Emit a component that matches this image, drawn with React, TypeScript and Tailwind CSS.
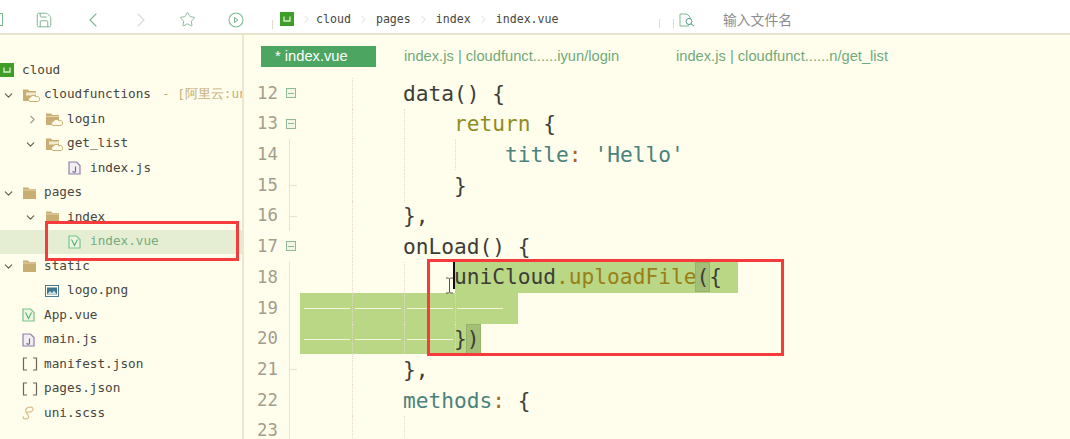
import type { ReactNode } from "react";
import { ChevronRight, ChevronDown, ChevronLeft, Star, Save } from "lucide-react";

const mono = "font-['DejaVu_Sans_Mono',monospace]";

// sidebar tree
const tree = [
  { label: "cloud", depth: 0, icon: "uni" },
  { label: "cloudfunctions", depth: 0, arrow: "down", icon: "cloudOpen", extra: true },
  { label: "login", depth: 1, arrow: "right", icon: "cloudClosed" },
  { label: "get_list", depth: 1, arrow: "down", icon: "cloudOpen" },
  { label: "index.js", depth: 2, icon: "js" },
  { label: "pages", depth: 0, arrow: "down", icon: "folder" },
  { label: "index", depth: 1, arrow: "down", icon: "folder" },
  { label: "index.vue", depth: 2, icon: "vue", active: true },
  { label: "static", depth: 0, arrow: "down", icon: "folder" },
  { label: "logo.png", depth: 1, icon: "image" },
  { label: "App.vue", depth: 0, icon: "vue" },
  { label: "main.js", depth: 0, icon: "js" },
  { label: "manifest.json", depth: 0, icon: "json" },
  { label: "pages.json", depth: 0, icon: "json" },
  { label: "uni.scss", depth: 0, icon: "sass" },
];

function UniLogo() {
  return (
    <svg width="14" height="14" viewBox="0 0 14 14" className="shrink-0">
      <rect width="14" height="14" fill="#3f9e2a" />
      <path d="M4 4.500v4.500h6V4.500" fill="none" stroke="#d9efc9" strokeWidth="1.300" />
    </svg>
  );
}

function FileIcon({ name }: { name: string }) {
  if (name === "uni") return <UniLogo />;
  if (name === "folder" || name === "cloudOpen" || name === "cloudClosed") {
    return (
      <svg width="18" height="14" viewBox="0 0 18 14">
        <path d="M1 1.500h5l1.500 1.500H14V13H1z" fill="#c9ae73" />
        {name === "cloudOpen" && <path d="M4 4.500h10.500l-1.500 3H4z" fill="#f2ead0" />}
        {name === "cloudClosed" && <path d="M1 4.500h13" stroke="#e5d6ac" strokeWidth="1" />}
        {name === "folder" && <path d="M1 4h13" stroke="#e5d6ac" strokeWidth="1" />}
        {name !== "folder" && (
          <path d="M8 13.500a2.200 2.200 0 0 1 .5-4.300 3 3 0 0 1 5.300-.4 2.400 2.400 0 0 1 2.500 4.700z" fill="#fffdeb" stroke="#c9ae73" strokeWidth="1" />
        )}
      </svg>
    );
  }
  if (name === "js") {
    return (
      <svg width="13" height="14" viewBox="0 0 13 14">
        <path d="M1 1h7.500L12 4.500V13H1z" fill="#f1eef2" stroke="#8d80ad" strokeWidth="1.200" />
        <path d="M7.500 5.500v4.500a1.300 1.300 0 0 1-2.600 0" fill="none" stroke="#6e6490" strokeWidth="1.100" />
      </svg>
    );
  }
  if (name === "vue") {
    return (
      <svg width="13" height="14" viewBox="0 0 13 14">
        <path d="M1 1h7.500L12 4.500V13H1z" fill="#eef6e2" stroke="#79c48e" strokeWidth="1.200" />
        <path d="M3.500 4.500L6.500 10.500L9.500 4.500" fill="none" stroke="#54ae6e" strokeWidth="1.100" />
      </svg>
    );
  }
  if (name === "image") {
    return (
      <svg width="14" height="12" viewBox="0 0 14 12">
        <rect x="0.500" y="0.500" width="13" height="11" fill="#fffdeb" stroke="#4c7c91" />
        <rect x="2" y="2.500" width="10" height="7" fill="#3f7590" />
        <path d="M2 9.500l3-3.500 2 2 2-2.500 3 4z" fill="#c9dde0" />
      </svg>
    );
  }
  if (name === "json") {
    return (
      <svg width="16" height="14" viewBox="0 0 16 14">
        <path d="M5 1H1.500v12H5M11 1h3.500v12H11" fill="none" stroke="#6b6658" strokeWidth="1.200" />
      </svg>
    );
  }
  return (
    <svg width="13" height="14" viewBox="0 0 13 14">
      <path d="M2.500 12.500c3 1 5-1 3.500-3.500S2 5 4.500 2.500s7-1.500 6.500 1-4 3-6 2.500M2 10.500c-2 1.500 0 3 1.500 2" fill="none" stroke="#d8bf85" strokeWidth="1.200" />
    </svg>
  );
}

function TreeRow({ item }: { item: (typeof tree)[number] }) {
  return (
    <div className={`relative flex h-[24.5px] shrink-0 items-center whitespace-nowrap ${item.depth === 2 ? "pl-[68px]" : item.depth === 1 ? "pl-[45px]" : "pl-[22px]"} ${item.active ? "bg-[#e5eed3] text-[#74ad80]" : "text-[#47463f]"}`}>
      {item.arrow === "down" && (
        <ChevronDown className={`absolute top-[6px] ${item.depth === 1 ? "left-[24px]" : "left-[2px]"} h-[13px] w-[13px] text-[#5e5c52]`} strokeWidth={2} />
      )}
      {item.arrow === "right" && <ChevronRight className="absolute left-[26px] top-[6px] h-[13px] w-[13px] text-[#a19d8d]" strokeWidth={2} />}
      <span className={`flex shrink-0 items-center ${item.icon === "uni" ? "-ml-[22px] w-[22px]" : "w-[22px]"}`}>
        <FileIcon name={item.icon} />
      </span>
      <span className={`${mono} text-[12.7px] leading-none`}>{item.label}</span>
      {item.extra && (
        <span className={`${mono} ml-[11px] text-[12.7px] leading-none text-[#c6ad78]`}>
          - [阿里云:un
        </span>
      )}
    </div>
  );
}

function Sidebar() {
  return (
    <aside className="flex h-full w-[244px] shrink-0 flex-col overflow-hidden border-r-2 border-[#ebe6cf] bg-[#fffdeb] pt-[23px]">
      {tree.map((item) => (
        <TreeRow key={item.label + item.depth} item={item} />
      ))}
    </aside>
  );
}

function Crumb() {
  return <ChevronRight className="mx-[6px] h-[13px] w-[13px] shrink-0 text-[#c8c8c8]" strokeWidth={1.200} />;
}

function Toolbar() {
  return (
    <header className="relative flex h-[35px] shrink-0 items-center border-b-2 border-[#e8e3cf] bg-white pt-[6px]">
      <div className="flex w-[272px] shrink-0 items-center text-[#7fb692]">
        <span className="h-[13px] w-[3px] border-y border-r border-[#7fb692]" />
        <Save className="ml-[32px] h-[18px] w-[18px]" strokeWidth={1.300} />
        <ChevronLeft className="ml-[28px] h-[24px] w-[24px]" strokeWidth={1.100} />
        <ChevronRight className="ml-[24px] h-[24px] w-[24px] text-[#d6d6d6]" strokeWidth={1.100} />
        <Star className="ml-[26px] h-[17px] w-[17px]" strokeWidth={1.300} />
        <svg className="ml-[32px]" width="16" height="16" viewBox="0 0 16 16">
          <circle cx="8" cy="8" r="7" fill="none" stroke="#7fb692" strokeWidth="1.100" />
          <path d="M6.500 5.500l3.500 2.500-3.500 2.500z" fill="none" stroke="#7fb692" />
        </svg>
      </div>
      <div className={`${mono} relative flex w-[387px] shrink-0 items-center pl-[8px] text-[11.6px] text-[#47463f]`}>
        <span className="absolute -bottom-[1px] left-0 h-[9px] border-l border-[#e0dccb]" />
        <UniLogo />
        <Crumb />
        <span className="-ml-[3px]">cloud</span>
        <Crumb />
        <span>pages</span>
        <Crumb />
        <span>index</span>
        <Crumb />
        <span>index.vue</span>
      </div>
      <div className="relative flex flex-1 items-center pl-[20px]">
        <span className="absolute -bottom-[1px] left-0 h-[9px] border-l border-[#e0dccb]" />
        <span className="absolute -bottom-[1px] left-[14px] h-[9px] border-l border-[#e0dccb]" />
        <svg width="17" height="14" viewBox="0 0 17 14">
          <path d="M10 13H1V1h7l3 3v2" fill="none" stroke="#7fb692" />
          <circle cx="10" cy="8.500" r="3" fill="none" stroke="#4f9a8f" />
          <path d="M12 11l3 2" stroke="#4f9a8f" />
        </svg>
        <span className="ml-[27px] font-['Noto_Sans_CJK_SC',sans-serif] text-[13.8px] leading-none text-[#8c8c8c]">输入文件名</span>
      </div>
    </header>
  );
}

function Tabs() {
  return (
    <div className="flex h-[34px] shrink-0 items-start pt-[11px] font-['Liberation_Sans',sans-serif] text-[14.7px] leading-[21px] text-[#71a97c]">
      <div className="ml-[17px] h-[21px] w-[115px] shrink-0 bg-[#4da562] pl-[14px] text-white">* index.vue</div>
      <div className="ml-[28px] w-[272px] shrink-0 whitespace-nowrap">index.js | cloudfunct......iyun/login</div>
      <div className="whitespace-nowrap">index.js | cloudfunct......n/get_list</div>
    </div>
  );
}

function Guides({ count }: { count: number }) {
  const lefts = ["left-[108px]", "left-[160px]", "left-[211px]"];
  return (
    <>
      {lefts.slice(0, count).map((l) => (
        <span key={l} className={`absolute top-0 h-full border-l border-dotted border-[#e4d9cc] ${l}`} />
      ))}
    </>
  );
}

function Line({ n, fold, guides = 1, rail, tick, children, under }: { n: number; fold?: boolean; guides?: number; rail?: boolean; tick?: boolean; children?: ReactNode; under?: ReactNode }) {
  return (
    <div className={`${mono} relative flex h-[30.7px] shrink-0 items-center whitespace-pre text-[21.2px] leading-none text-[#3d3d38]`}>
      {under}
      <Guides count={guides} />
      <span className="z-10 w-[38px] shrink-0 pl-[13px] text-[17.3px] text-[#a39d8c]">{n}</span>
      {fold && <span className="absolute left-[42px] top-[10px] z-10 flex h-[10px] w-[10px] items-center justify-center border border-[#8fb99a] bg-[#f2f7e2]"><span className="h-px w-[6px] bg-[#8fb99a]" /></span>}
      {rail && <span className="absolute left-[45px] top-0 h-full border-l border-[#e8e2cf]" />}
      {tick && <span className="absolute left-[45px] top-[15px] w-[8px] border-t border-[#e8e2cf]" />}
      <span className="z-10 ml-[121px]">{children}</span>
    </div>
  );
}

const indent = "    ";

function WhiteDashes({ count }: { count: number }) {
  const slots = ["left-[60px]", "left-[111px]", "left-[163px]", "left-[213px]"];
  return (
    <>
      {slots.slice(0, count).map((s) => (
        <span key={s} className={`absolute top-[15px] z-[1] h-px w-[46px] bg-[#f4f5dc] ${s}`} />
      ))}
    </>
  );
}

function Bracket({ children }: { children: ReactNode }) {
  return <span className="inline-block h-[30px] border border-[#97b36a] bg-[#a3bf75] leading-[28px] -mx-px">{children}</span>;
}

function Editor() {
  return (
    <main className="relative flex min-w-0 flex-1 flex-col overflow-hidden bg-[#fffeec]">
      <Tabs />
      <div className="flex flex-col pt-[9px]">
        <Line n={12} fold>data() {"{"}</Line>
        <Line n={13} fold guides={2}>{indent}<span className="text-[#8e8c20]">return</span> {"{"}</Line>
        <Line n={14} rail guides={3}>{indent}{indent}<span className="text-[#4b827c]">title</span><span className="text-[#a8661f]">:</span> <span className="text-[#4b827c]">'Hello'</span></Line>
        <Line n={15} rail tick guides={2}>{indent}{"}"}</Line>
        <Line n={16} rail tick>{"},"}</Line>
        <Line n={17} fold>onLoad() {"{"}</Line>
        <Line n={18} rail guides={2} under={<span className="absolute left-[211px] top-0 h-full w-[283px] bg-[#b9d785]" />}>
          {indent}
          <span className="relative">
            <span className="absolute -left-px top-[-5px] h-[30px] w-[2px] bg-[#111]" />
            uniCloud<span className="text-[#9a7f16]">.uploadFile</span>
            <Bracket>(</Bracket>{"{"}
          </span>
        </Line>
        <Line
          n={19}
          rail
          guides={3}
          under={
            <>
              <span className="absolute left-[56px] top-0 h-full w-[218px] bg-[#b9d785]" />
              <WhiteDashes count={4} />
            </>
          }
        />
        <Line
          n={20}
          rail
          guides={3}
          under={
            <>
              <span className="absolute left-[56px] top-0 h-full w-[180px] bg-[#b9d785]" />
              <WhiteDashes count={3} />
            </>
          }
        >
          {indent}{"}"}<Bracket>)</Bracket>
        </Line>
        <Line n={21} rail tick>{"},"}</Line>
        <Line n={22} rail><span className="text-[#4b827c]">methods</span><span className="text-[#a8661f]">:</span> {"{"}</Line>
        <Line n={23} rail guides={2} />
      </div>
      {/* mouse cursor */}
      <svg className="absolute left-[201px] top-[242px] z-20" width="9" height="17" viewBox="0 0 9 17">
        <path d="M1 1h2.500l1 1 1-1H8M4.500 2v13M1 16h2.500l1-1 1 1H8" fill="none" stroke="#555" strokeWidth="1" />
      </svg>
      {/* red annotation box */}
      <span className="absolute left-[183px] top-[224px] z-30 h-[97px] w-[357px] border-[3px] border-[#f53b3b]" />
    </main>
  );
}

export default function App() {
  return (
    <div className="relative flex h-[439px] w-[1070px] flex-col overflow-hidden bg-white">
      <Toolbar />
      <div className="flex min-h-0 flex-1">
        <Sidebar />
        <Editor />
      </div>
      {/* red annotation box */}
      <span className="absolute left-[45px] top-[221px] z-30 h-[40px] w-[194px] border-[3px] border-[#f53b3b]" />
    </div>
  );
}
